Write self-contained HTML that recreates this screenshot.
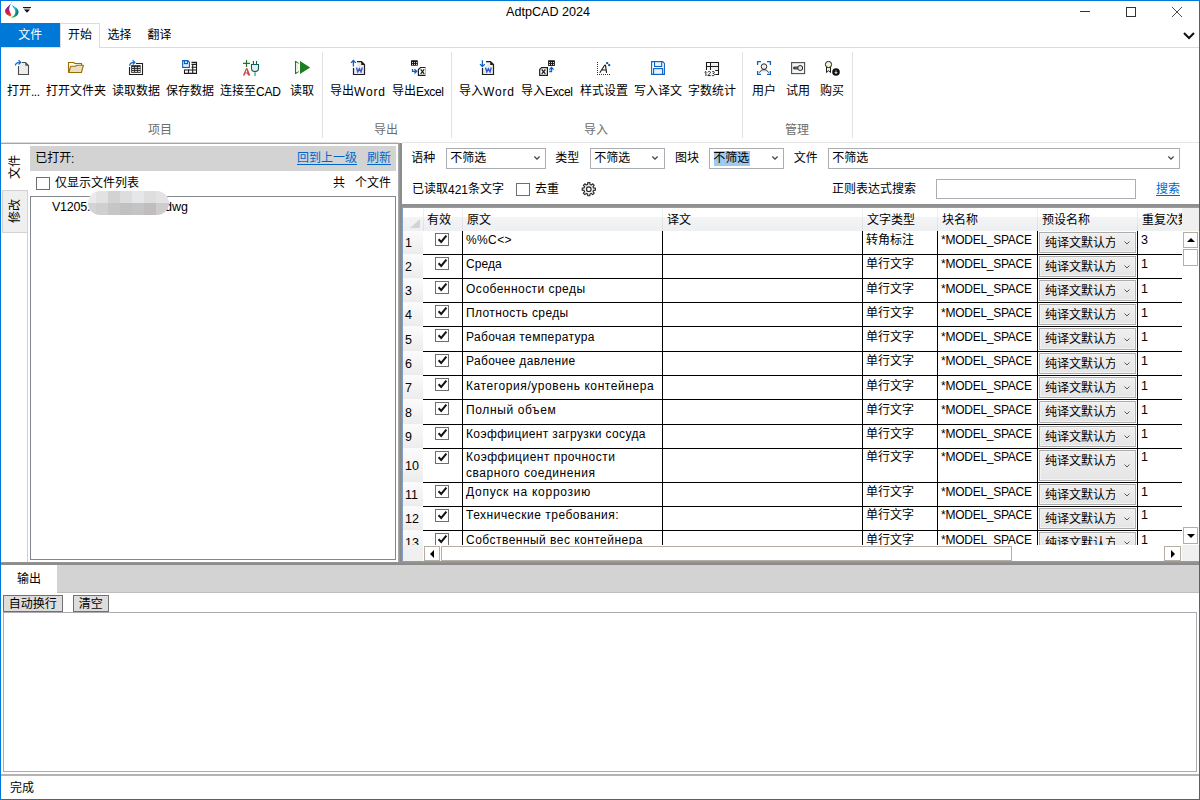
<!DOCTYPE html>
<html><head><meta charset="utf-8">
<style>
*{box-sizing:border-box;margin:0;padding:0}
html,body{width:1200px;height:800px;overflow:hidden;background:#fff}
body{font-family:"Liberation Sans","Noto Sans CJK SC",sans-serif;font-size:12px;line-height:16px;color:#000;position:relative;}
#w{position:absolute;left:0;top:0;width:1200px;height:800px;overflow:hidden}
#bd{position:absolute;left:0;top:0;width:1200px;height:800px;border:1px solid #0078d7;z-index:99}
.a{position:absolute}
.t{position:absolute;white-space:nowrap;height:16px;line-height:16px}
.g{color:#6d6d6d}
.lnk{color:#0066cc}
.h{display:inline-block;position:relative;height:16px;line-height:16px;overflow:hidden;vertical-align:top;font-family:"Liberation Sans","Noto Sans CJK SC",sans-serif;font-size:12px}
svg.lt{position:static;display:inline-block;vertical-align:top;overflow:visible}
svg text{font-family:"Liberation Sans",sans-serif;font-size:12px;fill:#000}
.ul{position:absolute;left:0;right:0;top:14px;height:1px;background:#0066cc}
.sep{position:absolute;width:1px;background:#e2e2e2;top:52px;height:86px}
.cb{position:absolute;width:14px;height:13px;border:1px solid #6e6e6e;background:#fff}
.combo{position:absolute;height:21px;border:1px solid #abadb3;background:#fff}
.btn{position:absolute;height:17px;border:1px solid #707070;background:#ddd}
.hl{position:absolute;height:1px;background:#000;left:423px;width:759px}
.vl{position:absolute;width:1px;background:#000;top:231px;height:314px}
.rh{position:absolute;left:403px;width:20px;background:linear-gradient(#fbfbfb,#ececec)}
.cc{position:absolute;left:1039px;width:97px;height:21px;border:1px solid #acacac;background:linear-gradient(#efefef,#e5e5e5);overflow:hidden}
.cc i{position:absolute;left:0;top:0;right:0;bottom:0;border:1px solid #f3f3f3}
.w{letter-spacing:.65px}.e{letter-spacing:-.25px}.c{letter-spacing:0}
.sb{position:absolute;border:1px solid #b5aea2;background:#fff}
svg{position:absolute;overflow:visible}
</style></head><body>
<div id="w">

<svg style="left:0;top:0" width="22" height="20" viewBox="0 0 22 20"><defs><linearGradient id="ga" x1="0" y1="0" x2="0" y2="1"><stop offset="0" stop-color="#6f2bb0"/><stop offset=".3" stop-color="#8a1f96"/><stop offset=".55" stop-color="#c4185e"/><stop offset=".8" stop-color="#d6282c"/><stop offset="1" stop-color="#f58a1c"/></linearGradient><linearGradient id="gb" x1="0" y1="0" x2="0" y2="1"><stop offset="0" stop-color="#2aa8f2"/><stop offset=".4" stop-color="#25c3dc"/><stop offset=".7" stop-color="#16a58a"/><stop offset="1" stop-color="#2fa23a"/></linearGradient><linearGradient id="gc" x1="0" y1="0" x2="1" y2="0"><stop offset=".45" stop-color="#004a5c" stop-opacity="0"/><stop offset="1" stop-color="#004a5c" stop-opacity=".75"/></linearGradient></defs>
<path d="M10.4 4.2C9.3 5.6 6.6 7.3 5.4 9.6C4.5 11.6 5.3 13.4 7 14.7C8.3 15.7 9.8 16.3 11.2 16.6C11.6 15.6 11 14.2 10.4 13C9.6 11.4 9 9.8 9.3 8C9.5 6.7 10.2 5.6 10.4 4.2Z" fill="url(#ga)"/>
<path d="M12.2 4.4C13 5.6 15.4 6.9 17 8.6C18.4 10.1 18.9 12 18 14C17 16 14.6 17.4 12.3 17.8C11.9 17.8 11.6 17.5 11.6 17.2C13.2 16.4 14.6 15 15.2 13.2C15.7 11.4 15 9.6 13.8 8.2C12.9 7.1 12.2 6 12.2 4.4Z" fill="url(#gb)"/>
<path d="M12.2 4.4C13 5.6 15.4 6.9 17 8.6C18.4 10.1 18.9 12 18 14C17 16 14.6 17.4 12.3 17.8C11.9 17.8 11.6 17.5 11.6 17.2C13.2 16.4 14.6 15 15.2 13.2C15.7 11.4 15 9.6 13.8 8.2C12.9 7.1 12.2 6 12.2 4.4Z" fill="url(#gc)"/>
<circle cx="11.4" cy="2.5" r=".45" fill="#3aa0f0"/><circle cx="10.5" cy="4.3" r=".5" fill="#3a86e8"/></svg>
<div class="a" style="left:23px;top:7px;width:8px;height:1px;background:#111"></div>
<svg style="left:23px;top:8px" width="8" height="5" viewBox="0 0 8 5"><path d="M0.5 0H7.5L7 1.2H1Z" fill="#bbb"/><path d="M1 1.4H7L4 4.8Z" fill="#111"/></svg>
<div class="t lat" style="left:506px;top:4px;"><svg class="lt" width="84" height="16"><text y="12" textLength="84" lengthAdjust="spacing" style="font-size:12.6px">AdtpCAD 2024</text></svg></div>
<div class="a" style="left:1080px;top:11px;width:10px;height:1px;background:#333"></div>
<div class="a" style="left:1126px;top:7px;width:10px;height:10px;border:1px solid #333"></div>
<svg style="left:1172px;top:7px" width="10" height="10" viewBox="0 0 10 10"><path d="M0 0L10 10M10 0L0 10" stroke="#4a4a4a" stroke-width="1" fill="none"/></svg>


<div class="a" style="left:1px;top:23px;width:59px;height:24px;background:#0078d7"></div>
<div class="a" style="left:0;top:47px;width:1200px;height:1px;background:#dcdcdc"></div>
<div class="a" style="left:60px;top:23px;width:40px;height:25px;border:1px solid #dcdcdc;border-bottom:none;background:#fff"></div>
<div class="t " style="left:18.2px;top:27px;color:#fff"><span class="h" style="width:24px">文件</span></div><div class="t " style="left:68px;top:27px;"><span class="h" style="width:24px">开始</span></div><div class="t " style="left:107.4px;top:27px;"><span class="h" style="width:24px">选择</span></div><div class="t " style="left:147.4px;top:27px;"><span class="h" style="width:24px">翻译</span></div>
<svg style="left:1183px;top:31.5px" width="12" height="8" viewBox="0 0 12 8"><path d="M1 1L6 6L11 1" stroke="#111" stroke-width="2" fill="none"/></svg>

<div class="t " style="left:7px;top:83px;"><span class="h" style="width:24px">打开</span><svg class="lt" width="9" height="16"><text y="13" textLength="9" lengthAdjust="spacing">...</text></svg></div><div class="t " style="left:46px;top:83px;"><span class="h" style="width:60px">打开文件夹</span></div><div class="t " style="left:112px;top:83px;"><span class="h" style="width:48px">读取数据</span></div><div class="t " style="left:166px;top:83px;"><span class="h" style="width:48px">保存数据</span></div><div class="t " style="left:220px;top:83px;"><span class="h" style="width:36px">连接至</span><svg class="lt" width="25" height="16"><text y="13" textLength="25" lengthAdjust="spacing">CAD</text></svg></div><div class="t " style="left:290px;top:83px;"><span class="h" style="width:24px">读取</span></div><div class="t " style="left:330px;top:83px;"><span class="h" style="width:24px">导出</span><svg class="lt" width="31" height="16"><text y="13" textLength="31" lengthAdjust="spacing">Word</text></svg></div><div class="t " style="left:392px;top:83px;"><span class="h" style="width:24px">导出</span><svg class="lt" width="28" height="16"><text y="13" textLength="28" lengthAdjust="spacing">Excel</text></svg></div><div class="t " style="left:459px;top:83px;"><span class="h" style="width:24px">导入</span><svg class="lt" width="31" height="16"><text y="13" textLength="31" lengthAdjust="spacing">Word</text></svg></div><div class="t " style="left:521px;top:83px;"><span class="h" style="width:24px">导入</span><svg class="lt" width="28" height="16"><text y="13" textLength="28" lengthAdjust="spacing">Excel</text></svg></div><div class="t " style="left:580px;top:83px;"><span class="h" style="width:48px">样式设置</span></div><div class="t " style="left:634px;top:83px;"><span class="h" style="width:48px">写入译文</span></div><div class="t " style="left:688px;top:83px;"><span class="h" style="width:48px">字数统计</span></div><div class="t " style="left:752px;top:83px;"><span class="h" style="width:24px">用户</span></div><div class="t " style="left:786px;top:83px;"><span class="h" style="width:24px">试用</span></div><div class="t " style="left:820px;top:83px;"><span class="h" style="width:24px">购买</span></div><div class="t g" style="left:148px;top:122px;"><span class="h" style="width:24px">项目</span></div><div class="t g" style="left:374px;top:122px;"><span class="h" style="width:24px">导出</span></div><div class="t g" style="left:584px;top:122px;"><span class="h" style="width:24px">导入</span></div><div class="t g" style="left:785px;top:122px;"><span class="h" style="width:24px">管理</span></div><div class="sep" style="left:322px"></div><div class="sep" style="left:451px"></div><div class="sep" style="left:742px"></div><div class="sep" style="left:852px"></div><svg style="left:0;top:50px" width="860" height="30" viewBox="0 50 860 30" fill="none" stroke-linecap="butt">
<!-- 1 open -->
<path d="M19 66V74H28V65.5L25.5 63H22Z" fill="#ededed"/>
<path d="M22 62.5H25.5L28.5 65.5V74.5H18.5V66" stroke="#4a4a4a" stroke-width="1.1"/>
<path d="M25.3 62.3V65.7H28.7Z" fill="#555"/>
<path d="M15.4 65.6C15.4 63.4 17 62.4 20.2 62.4" stroke="#186ac6" stroke-width="1.3"/>
<path d="M18.5 60.3L20.8 62.4L18.5 64.5" stroke="#186ac6" stroke-width="1.2"/>
<!-- 2 folder -->
<path d="M68.5 72.5V62.5H73.8L74.8 63.5H81.5V65.3" stroke="#9a6d00" stroke-width="1.1" fill="#fffdf8"/>
<path d="M68.8 72.5L70.6 66.3H75.5L76.5 65.3H83.4L81.4 72.5Z" fill="#e7dfc5" stroke="#9a6d00" stroke-width="1.1" stroke-linejoin="round"/>
<!-- 3 read data -->
<path d="M136 63.5H142.5V74.5H129.5V67" stroke="#1e1e1e" stroke-width="1.1"/>
<rect x="131.2" y="65.2" width="9.4" height="7.6" fill="#1e1e1e"/>
<path d="M132 67.4H134.2M135 67.4H137.2M138 67.4H140.1M132 69.4H134.2M135 69.4H137.2M138 69.4H140.1M132 71.4H134.2M135 71.4H137.2M138 71.4H140.1" stroke="#fff" stroke-width="0.9"/>
<path d="M129.6 65.7C129.8 63.5 131.5 62.4 134.3 62.4" stroke="#186ac6" stroke-width="1.3"/>
<path d="M132.6 60.3L134.9 62.4L132.7 64.5" stroke="#186ac6" stroke-width="1.2"/>
<!-- 4 save data -->
<path d="M182.7 60.7H187.8L189.4 62.3V67.3H182.7Z" stroke="#0a5fc2" stroke-width="1.2" fill="#fff"/>
<path d="M184.5 60.7V63.6H187.4V60.7" stroke="#0a5fc2" stroke-width="1.2"/>
<rect x="183.6" y="65" width="4.9" height="1.6" fill="#dfe9f7"/>
<path d="M191.5 62.4H196.5V73.4H184.5V69.5M191.5 64.4H196.5M191.5 67.3H196.5M184.5 70H196.5M192.7 64.4V73.4M188.5 69.3V73.4" stroke="#1a1a1a" stroke-width="1.1"/>
<!-- 5 connect CAD -->
<path d="M243 63.4H250M246.5 60V66.9" stroke="#1b7a1b" stroke-width="1.2"/>
<path d="M242.8 75.6L246 68.3H247.5L250.4 75.6H248L247.2 73.4H245.3L244.6 75.6Z" fill="#c4302b" fill-opacity=".88"/>
<path d="M245.6 72.4L246.7 69.6L247.2 72.4Z" fill="#fff"/>
<path d="M253.4 61V64.3M256.5 61V64.3" stroke="#0e5e57" stroke-width="1.1"/>
<path d="M251.5 64.5H258.5V68.6C258.5 70.5 257 71.6 255 71.6C253 71.6 251.5 70.5 251.5 68.6Z" fill="#e6efed" stroke="#0e5e57" stroke-width="1.1"/>
<path d="M255 72.2V76" stroke="#69aaa1" stroke-width="1.6"/>
<!-- 6 play -->
<path d="M295.5 61V74M295.3 61.3L298.8 63.6M295.3 73.7L298.8 71.4" stroke="#1e7d1e" stroke-width="1.1"/>
<path d="M296.2 63V72H298.3V63Z" fill="#e3f0e3"/>
<path d="M300 61V74L310.2 67.5Z" fill="#1e7d1e"/>
<!-- 7 export word -->
<g id="wd"><path d="M354 68V74H364V64.5L361.5 62H357.5V68Z" fill="#ececec"/>
<path d="M357 61.6H361.5L364.5 64.6V74.5H353.5V68" stroke="#1e1e1e" stroke-width="1.2"/>
<path d="M361.2 61.3V64.9H364.8Z" fill="#1e1e1e"/>
<path d="M356.5 67.5L357.8 71.9L359.4 68.7L361 71.9L362.3 67.5" stroke="#3558cc" stroke-width="1.4"/></g>
<path d="M353.4 66.6V60.8M351 62.9L353.4 60.5L355.8 62.9" stroke="#0a62c4" stroke-width="1.3"/>
<!-- 8 export excel -->
<rect x="411" y="60.2" width="6.8" height="5.6" fill="#151515" rx=".4"/>
<path d="M412 62.6H413M414 62.6H415M416 62.6H417M412 64.6H413M414 64.6H415M416 64.6H417" stroke="#fff" stroke-width="0.9"/>
<path d="M412.5 69V71.3H416.3M414.4 69.2L416.7 71.3L414.4 73.4" stroke="#0a62c4" stroke-width="1.3"/>
<path d="M425.6 67.5H420.5L418.4 69.6V75.3H425.6" stroke="#1e1e1e" stroke-width="1.2" fill="#fff"/>
<path d="M425.5 67.5V75.3" stroke="#b5b5b5" stroke-width="1"/>
<path d="M420.7 69.4L424.2 73.8M424.2 69.4L420.7 73.8" stroke="#222" stroke-width="1.3"/>
<!-- 9 import word -->
<use href="#wd" x="129"/>
<path d="M482.4 60.3V66.2M480 64.1L482.4 66.5L484.8 64.1" stroke="#0a62c4" stroke-width="1.3"/>
<!-- 10 import excel -->
<rect x="548.1" y="60.2" width="6.8" height="5.7" fill="#151515" rx=".4"/>
<path d="M549 62.6H550M551 62.6H552M553 62.6H554M549 64.6H550M551 64.6H552M553 64.6H554" stroke="#fff" stroke-width="0.9"/>
<path d="M541.6 67.7H547.4V75.3H539.7V69.6Z" stroke="#1e1e1e" stroke-width="1.2" fill="#fff"/>
<path d="M541.7 69.5L545.4 73.8M545.4 69.5L541.7 73.8" stroke="#222" stroke-width="1.3"/>
<path d="M549.2 71.5H551.5V67.6M549.4 69.6L551.5 67.4L553.6 69.6" stroke="#0a62c4" stroke-width="1.3"/>
<!-- 11 style -->
<path d="M597.5 62V75" stroke="#333" stroke-width="1" stroke-dasharray="1 1"/>
<path d="M599 74.5H610" stroke="#333" stroke-width="1" stroke-dasharray="1 1"/>
<path d="M599.8 72.8L604.6 65.3H605.5L606.6 72.8M601.8 70H606.2" stroke="#1a1a1a" stroke-width="1.1"/>
<rect x="606.2" y="62.1" width="2" height="2" fill="#0a47b5"/><rect x="608.2" y="64.1" width="2" height="2" fill="#0a47b5"/>
<!-- 12 write -->
<path d="M651.6 61.6H662.6L664.4 63.4V74.4H651.6Z" stroke="#0a62c4" stroke-width="1.1" fill="#fff"/>
<rect x="654.5" y="61.6" width="7.2" height="4.9" stroke="#0a62c4" stroke-width="1.1" fill="#e9f0f9"/>
<rect x="653.6" y="68.6" width="9" height="5.8" stroke="#0a62c4" stroke-width="1.1" fill="#e9f0f9"/>
<!-- 13 count -->
<path d="M706.5 70V62.5H718.5V74.5H715.3M706.5 66.5H718.5M710.5 62.5V70M715.3 70.5H718.5" stroke="#1a1a1a" stroke-width="1.1"/>
<rect x="711.3" y="63.3" width="6.4" height="2.5" fill="#eee"/><rect x="711.3" y="67.3" width="6.4" height="2.5" fill="#eee"/>
<path d="M704.6 72.3L705.9 71.5V76M707.8 72.4C708.2 71.2 710.6 71.1 710.5 72.6C710.4 73.8 708 74.7 707.8 75.6H710.8M712 72C712.8 71.1 714.6 71.3 714.3 72.6C714.1 73.4 713.2 73.5 712.9 73.5C713.8 73.5 714.7 74 714.5 74.8C714.2 75.9 712.5 75.9 711.8 75.2" stroke="#1a1a1a" stroke-width=".95" fill="none"/>
<!-- 14 user -->
<path d="M757.6 65V61.7H761M767 61.7H770.4V65M770.4 71V74.4H767M761 74.4H757.6V71" stroke="#0a62c4" stroke-width="1.3"/>
<circle cx="764" cy="66.6" r="2.8" fill="#ededed" stroke="#2a2a2a" stroke-width="1"/>
<path d="M759.4 72.6C760.5 70.5 762 69.7 764 69.7C766 69.7 767.5 70.5 768.6 72.6Z" fill="#e9e9e9"/>
<path d="M759.4 72.6C760.5 70.5 762 69.7 764 69.7C766 69.7 767.5 70.5 768.6 72.6" stroke="#2a2a2a" stroke-width="1"/>
<!-- 15 trial -->
<rect x="791.6" y="62.6" width="13" height="11" stroke="#4d4d4d" stroke-width="1.1" fill="#f5f5f5"/>
<path d="M793.7 68H798" stroke="#555" stroke-width="3"/>
<path d="M793.4 68H794.6" stroke="#222" stroke-width="2"/>
<circle cx="800.2" cy="68" r="2.5" fill="#e4e4e4" stroke="#222" stroke-width="1"/>
<!-- 16 buy -->
<path d="M826.5 67V72.6L828.5 70.7L830.5 72.6V67Z" fill="#f7f3d8" stroke="#1a1a1a" stroke-width="1"/>
<circle cx="828.5" cy="64.5" r="3.1" fill="#f7f3d8" stroke="#1a1a1a" stroke-width="1"/>
<circle cx="836" cy="72" r="3.8" fill="#111"/>
<path d="M836 70.2V72.2" stroke="#aaa" stroke-width="1"/>
<path d="M834.2 72.2H837.8L836 73.9Z" fill="#fff"/>
</svg>


<div class="a" style="left:402px;top:142px;width:797px;height:1px;background:#e5e5e5"></div>
<div class="a" style="left:1px;top:142px;width:398px;height:2px;background:linear-gradient(#dcdcdc 50%,#a6a6a6 50%)"></div>
<div class="a" style="left:398px;top:143px;width:4px;height:420px;background:linear-gradient(90deg,#b2b2b2,#999 30%,#8a8a8a 60%,#909090)"></div>
<div class="a" style="left:27px;top:190px;width:1px;height:372px;background:#d0d0d0"></div>
<div class="a" style="left:2px;top:190px;width:26px;height:43px;border:1px solid #d2d2d2;background:#efefef"></div>
<div class="t " style="left:2.5px;top:159px;width:24px;transform:rotate(-90deg);transform-origin:12px 8px"><span class="h" style="width:24px">文件</span></div><div class="t " style="left:2.5px;top:203px;width:24px;transform:rotate(-90deg);transform-origin:12px 8px"><span class="h" style="width:24px">修改</span></div>
<div class="a" style="left:30px;top:146px;width:366px;height:25px;background:#d3d3d3"></div>
<div class="t " style="left:35.3px;top:150px;"><span class="h" style="width:36px">已打开</span><svg class="lt" width="3.4" height="16"><text y="13" textLength="3.4" lengthAdjust="spacing">:</text></svg></div><div class="t lnk" style="left:297px;top:150px;"><span class="h" style="width:60px"><i class="ul"></i>回到上一级</span></div><div class="t lnk" style="left:367px;top:150px;"><span class="h" style="width:24px"><i class="ul"></i>刷新</span></div>
<div class="cb" style="left:36px;top:177px"></div>
<div class="t " style="left:55px;top:175px;"><span class="h" style="width:84px">仅显示文件列表</span></div><div class="t " style="left:333px;top:175px;"><span class="h" style="width:12px">共</span></div><div class="t " style="left:355px;top:175px;"><span class="h" style="width:36px">个文件</span></div>
<div class="a" style="left:30px;top:196px;width:366px;height:364px;border:1px solid #828790;background:#fff"></div>
<div class="t lat" style="left:52px;top:199px;"><svg class="lt" width="38.5" height="16"><text y="12" textLength="38.5" lengthAdjust="spacing" style="font-size:12.5px">V1205.</text></svg></div><div class="t lat" style="left:165px;top:199px;"><svg class="lt" width="23" height="16"><text y="12" textLength="23" lengthAdjust="spacing" style="font-size:12.5px">dwg</text></svg></div><div class="a" style="left:88px;top:191px;width:81px;height:24px;border-radius:12px;overflow:hidden"><div class="a" style="left:0px;top:0;width:8px;height:12px;background:#e9eaec"></div><div class="a" style="left:0px;top:12px;width:8px;height:12px;background:#d3d3d4"></div><div class="a" style="left:8px;top:0;width:12px;height:12px;background:#e2e2e3"></div><div class="a" style="left:8px;top:12px;width:12px;height:12px;background:#d0cfcf"></div><div class="a" style="left:20px;top:0;width:12px;height:12px;background:#d2d2d3"></div><div class="a" style="left:20px;top:12px;width:12px;height:12px;background:#c6c6c8"></div><div class="a" style="left:32px;top:0;width:12px;height:12px;background:#dcdddd"></div><div class="a" style="left:32px;top:12px;width:12px;height:12px;background:#c2c0c1"></div><div class="a" style="left:44px;top:0;width:12px;height:12px;background:#e6e7e9"></div><div class="a" style="left:44px;top:12px;width:12px;height:12px;background:#c4c4c6"></div><div class="a" style="left:56px;top:0;width:12px;height:12px;background:#dedede"></div><div class="a" style="left:56px;top:12px;width:12px;height:12px;background:#c0bdbc"></div><div class="a" style="left:68px;top:0;width:13px;height:12px;background:#e3e3e4"></div><div class="a" style="left:68px;top:12px;width:13px;height:12px;background:#cdcdce"></div></div>
<div class="t " style="left:411.3px;top:150px;"><span class="h" style="width:24px">语种</span></div><div class="combo" style="left:446px;top:148px;width:100px"></div><div class="t " style="left:450.3px;top:150px;"><span class="h" style="width:36px">不筛选</span></div><svg style="left:533.5px;top:155.8px" width="6" height="4" viewBox="0 0 6 4"><path d="M.4 .5L3 3.1L5.6 .5" stroke="#444" stroke-width="1.25" fill="none"/></svg><div class="t " style="left:555.3px;top:150px;"><span class="h" style="width:24px">类型</span></div><div class="combo" style="left:590px;top:148px;width:75px"></div><div class="t " style="left:594.3px;top:150px;"><span class="h" style="width:36px">不筛选</span></div><svg style="left:651.5px;top:155.8px" width="6" height="4" viewBox="0 0 6 4"><path d="M.4 .5L3 3.1L5.6 .5" stroke="#444" stroke-width="1.25" fill="none"/></svg><div class="t " style="left:675px;top:150px;"><span class="h" style="width:24px">图块</span></div><div class="combo" style="left:709px;top:148px;width:75px"></div><div class="a" style="left:714px;top:151px;width:36px;height:15px;background:#9fc9ee"></div><div class="t " style="left:713.3px;top:150px;"><span class="h" style="width:36px">不筛选</span></div><svg style="left:771.5px;top:155.8px" width="6" height="4" viewBox="0 0 6 4"><path d="M.4 .5L3 3.1L5.6 .5" stroke="#444" stroke-width="1.25" fill="none"/></svg><div class="t " style="left:793.7px;top:150px;"><span class="h" style="width:24px">文件</span></div><div class="combo" style="left:828px;top:148px;width:352px"></div><div class="t " style="left:832.3px;top:150px;"><span class="h" style="width:36px">不筛选</span></div><svg style="left:1167.5px;top:155.8px" width="6" height="4" viewBox="0 0 6 4"><path d="M.4 .5L3 3.1L5.6 .5" stroke="#444" stroke-width="1.25" fill="none"/></svg><div class="t " style="left:412px;top:181px;"><span class="h" style="width:36px">已读取</span><svg class="lt" width="20" height="16"><text y="13" textLength="20" lengthAdjust="spacing">421</text></svg><span class="h" style="width:36px">条文字</span></div><div class="cb" style="left:516px;top:183px"></div><div class="t " style="left:535px;top:181px;"><span class="h" style="width:24px">去重</span></div><svg style="left:574px;top:176px" width="30" height="26" viewBox="574 176 30 26"><path d="M587.59 184.45L587.73 182.59L589.87 182.59L590.01 184.45L591.30 184.99L592.72 183.77L594.23 185.28L593.01 186.70L593.55 187.99L595.41 188.13L595.41 190.27L593.55 190.41L593.01 191.70L594.23 193.12L592.72 194.63L591.30 193.41L590.01 193.95L589.87 195.81L587.73 195.81L587.59 193.95L586.30 193.41L584.88 194.63L583.37 193.12L584.59 191.70L584.05 190.41L582.19 190.27L582.19 188.13L584.05 187.99L584.59 186.70L583.37 185.28L584.88 183.77L586.30 184.99Z" fill="#f0f0f0" stroke="#262626" stroke-width="1.1" stroke-linejoin="round"/><circle cx="588.8" cy="189.2" r="2.3" fill="#fff" stroke="#262626" stroke-width="1.1"/></svg><div class="t " style="left:832px;top:181px;"><span class="h" style="width:84px">正则表达式搜索</span></div><div class="a" style="left:936px;top:179px;width:200px;height:20px;border:1px solid #abadb3;background:#fff"></div><div class="t lnk" style="left:1156px;top:181px;"><span class="h" style="width:24px"><i class="ul"></i>搜索</span></div><div class="a" style="left:402px;top:204px;width:797px;height:3px;background:linear-gradient(#8f8f8f 80%,#9fa9b5)"></div>

<div class="a" style="left:402px;top:207px;width:797px;height:355px;border:1px solid #7f9fc6;border-right:none;background:#fff"></div>
<div class="a" style="left:403px;top:208px;width:779px;height:23px;background:linear-gradient(#ffffff 0,#ffffff 40%,#f3f4f5 41%,#eeeff1 100%)"></div>
<div class="a" style="left:1182px;top:208px;width:17px;height:23px;background:#f0f0f0"></div>
<div class="a" style="left:403px;top:231px;width:20px;height:330px;background:#f0f0f0"></div>
<svg style="left:410px;top:219px" width="10" height="9" viewBox="0 0 10 9"><path d="M10 0V9H0Z" fill="#d4d4d4"/></svg>
<div class="a" style="left:423px;top:208px;width:1px;height:23px;background:linear-gradient(#f4f4f4,#dcdcdc)"></div><div class="a" style="left:462px;top:208px;width:1px;height:23px;background:linear-gradient(#f4f4f4,#dcdcdc)"></div><div class="a" style="left:662px;top:208px;width:1px;height:23px;background:linear-gradient(#f4f4f4,#dcdcdc)"></div><div class="a" style="left:862px;top:208px;width:1px;height:23px;background:linear-gradient(#f4f4f4,#dcdcdc)"></div><div class="a" style="left:937px;top:208px;width:1px;height:23px;background:linear-gradient(#f4f4f4,#dcdcdc)"></div><div class="a" style="left:1037px;top:208px;width:1px;height:23px;background:linear-gradient(#f4f4f4,#dcdcdc)"></div><div class="a" style="left:1137px;top:208px;width:1px;height:23px;background:linear-gradient(#f4f4f4,#dcdcdc)"></div><div class="t " style="left:427px;top:212px;"><span class="h" style="width:24px">有效</span></div><div class="t " style="left:467px;top:212px;"><span class="h" style="width:24px">原文</span></div><div class="t " style="left:667px;top:212px;"><span class="h" style="width:24px">译文</span></div><div class="t " style="left:867px;top:212px;"><span class="h" style="width:48px">文字类型</span></div><div class="t " style="left:942px;top:212px;"><span class="h" style="width:36px">块名称</span></div><div class="t " style="left:1042px;top:212px;"><span class="h" style="width:48px">预设名称</span></div><div class="t " style="left:1142px;top:212px;width:40px;overflow:hidden"><span class="h" style="width:48px">重复次数</span></div><div class="a" style="left:403px;top:231px;width:779px;height:314px;overflow:hidden"><div class="a" style="left:-403px;top:-231px;width:1200px;height:800px"><div class="rh" style="top:231px;height:23px"></div><div class="a" style="left:403px;top:254px;width:20px;height:1px;background:#fafafa"></div><div class="t lat" style="left:405px;top:235px;font-size:12.5px">1</div><div class="hl" style="top:254px"></div><div class="cb" style="left:435px;top:233px;height:13px"></div><svg style="left:438px;top:235px" width="9" height="8" viewBox="0 0 9 8"><path d="M.6 4.2L3.2 6.9L8.4 .7" stroke="#111" stroke-width="2" fill="none"/></svg><div class="t ru" style="left:466px;top:232px;"><svg class="lt" width="45.6" height="16"><text y="12" textLength="45.6" lengthAdjust="spacing">%%C&lt;&gt;</text></svg></div><div class="t " style="left:866px;top:232px;"><span class="h" style="width:48px">转角标注</span></div><div class="t lat" style="left:941px;top:232px;"><svg class="lt" width="91" height="16"><text y="12" textLength="91" lengthAdjust="spacing">*MODEL_SPACE</text></svg></div><div class="cc" style="top:232px;height:21px"><i></i></div><div class="t " style="left:1045px;top:235px;width:70px;overflow:hidden"><span class="h" style="width:72px">纯译文默认方</span></div><svg style="left:1123.5px;top:241px" width="6" height="4" viewBox="0 0 6 4"><path d="M.5 .5L3 3L5.5 .5" stroke="#5a5a5a" stroke-width="1" fill="none"/></svg><div class="t lat" style="left:1141px;top:232px;font-size:12.5px">3</div><div class="rh" style="top:255px;height:23px"></div><div class="a" style="left:403px;top:278px;width:20px;height:1px;background:#fafafa"></div><div class="t lat" style="left:405px;top:259px;font-size:12.5px">2</div><div class="hl" style="top:278px"></div><div class="cb" style="left:435px;top:257px;height:13px"></div><svg style="left:438px;top:259px" width="9" height="8" viewBox="0 0 9 8"><path d="M.6 4.2L3.2 6.9L8.4 .7" stroke="#111" stroke-width="2" fill="none"/></svg><div class="t ru" style="left:466px;top:256px;"><svg class="lt" width="35.8" height="16"><text y="12" textLength="35.8" lengthAdjust="spacing">Среда</text></svg></div><div class="t " style="left:866px;top:256px;"><span class="h" style="width:48px">单行文字</span></div><div class="t lat" style="left:941px;top:256px;"><svg class="lt" width="91" height="16"><text y="12" textLength="91" lengthAdjust="spacing">*MODEL_SPACE</text></svg></div><div class="cc" style="top:256px;height:21px"><i></i></div><div class="t " style="left:1045px;top:259px;width:70px;overflow:hidden"><span class="h" style="width:72px">纯译文默认方</span></div><svg style="left:1123.5px;top:265px" width="6" height="4" viewBox="0 0 6 4"><path d="M.5 .5L3 3L5.5 .5" stroke="#5a5a5a" stroke-width="1" fill="none"/></svg><div class="t lat" style="left:1141px;top:256px;font-size:12.5px">1</div><div class="rh" style="top:279px;height:23px"></div><div class="a" style="left:403px;top:302px;width:20px;height:1px;background:#fafafa"></div><div class="t lat" style="left:405px;top:283px;font-size:12.5px">3</div><div class="hl" style="top:302px"></div><div class="cb" style="left:435px;top:281px;height:13px"></div><svg style="left:438px;top:283px" width="9" height="8" viewBox="0 0 9 8"><path d="M.6 4.2L3.2 6.9L8.4 .7" stroke="#111" stroke-width="2" fill="none"/></svg><div class="t ru" style="left:466px;top:281px;"><svg class="lt" width="119" height="16"><text y="12" textLength="119" lengthAdjust="spacing">Особенности среды</text></svg></div><div class="t " style="left:866px;top:281px;"><span class="h" style="width:48px">单行文字</span></div><div class="t lat" style="left:941px;top:281px;"><svg class="lt" width="91" height="16"><text y="12" textLength="91" lengthAdjust="spacing">*MODEL_SPACE</text></svg></div><div class="cc" style="top:280px;height:21px"><i></i></div><div class="t " style="left:1045px;top:283px;width:70px;overflow:hidden"><span class="h" style="width:72px">纯译文默认方</span></div><svg style="left:1123.5px;top:289px" width="6" height="4" viewBox="0 0 6 4"><path d="M.5 .5L3 3L5.5 .5" stroke="#5a5a5a" stroke-width="1" fill="none"/></svg><div class="t lat" style="left:1141px;top:281px;font-size:12.5px">1</div><div class="rh" style="top:303px;height:23px"></div><div class="a" style="left:403px;top:326px;width:20px;height:1px;background:#fafafa"></div><div class="t lat" style="left:405px;top:307px;font-size:12.5px">4</div><div class="hl" style="top:326px"></div><div class="cb" style="left:435px;top:305px;height:13px"></div><svg style="left:438px;top:307px" width="9" height="8" viewBox="0 0 9 8"><path d="M.6 4.2L3.2 6.9L8.4 .7" stroke="#111" stroke-width="2" fill="none"/></svg><div class="t ru" style="left:466px;top:305px;"><svg class="lt" width="102.2" height="16"><text y="12" textLength="102.2" lengthAdjust="spacing">Плотность среды</text></svg></div><div class="t " style="left:866px;top:305px;"><span class="h" style="width:48px">单行文字</span></div><div class="t lat" style="left:941px;top:305px;"><svg class="lt" width="91" height="16"><text y="12" textLength="91" lengthAdjust="spacing">*MODEL_SPACE</text></svg></div><div class="cc" style="top:304px;height:21px"><i></i></div><div class="t " style="left:1045px;top:307px;width:70px;overflow:hidden"><span class="h" style="width:72px">纯译文默认方</span></div><svg style="left:1123.5px;top:313px" width="6" height="4" viewBox="0 0 6 4"><path d="M.5 .5L3 3L5.5 .5" stroke="#5a5a5a" stroke-width="1" fill="none"/></svg><div class="t lat" style="left:1141px;top:305px;font-size:12.5px">1</div><div class="rh" style="top:327px;height:24px"></div><div class="a" style="left:403px;top:351px;width:20px;height:1px;background:#fafafa"></div><div class="t lat" style="left:405px;top:331.5px;font-size:12.5px">5</div><div class="hl" style="top:351px"></div><div class="cb" style="left:435px;top:329px;height:13px"></div><svg style="left:438px;top:331px" width="9" height="8" viewBox="0 0 9 8"><path d="M.6 4.2L3.2 6.9L8.4 .7" stroke="#111" stroke-width="2" fill="none"/></svg><div class="t ru" style="left:466px;top:329px;"><svg class="lt" width="128.5" height="16"><text y="12" textLength="128.5" lengthAdjust="spacing">Рабочая температура</text></svg></div><div class="t " style="left:866px;top:329px;"><span class="h" style="width:48px">单行文字</span></div><div class="t lat" style="left:941px;top:329px;"><svg class="lt" width="91" height="16"><text y="12" textLength="91" lengthAdjust="spacing">*MODEL_SPACE</text></svg></div><div class="cc" style="top:328px;height:22px"><i></i></div><div class="t " style="left:1045px;top:331px;width:70px;overflow:hidden"><span class="h" style="width:72px">纯译文默认方</span></div><svg style="left:1123.5px;top:337.5px" width="6" height="4" viewBox="0 0 6 4"><path d="M.5 .5L3 3L5.5 .5" stroke="#5a5a5a" stroke-width="1" fill="none"/></svg><div class="t lat" style="left:1141px;top:329px;font-size:12.5px">1</div><div class="rh" style="top:352px;height:23px"></div><div class="a" style="left:403px;top:375px;width:20px;height:1px;background:#fafafa"></div><div class="t lat" style="left:405px;top:356px;font-size:12.5px">6</div><div class="hl" style="top:375px"></div><div class="cb" style="left:435px;top:354px;height:13px"></div><svg style="left:438px;top:356px" width="9" height="8" viewBox="0 0 9 8"><path d="M.6 4.2L3.2 6.9L8.4 .7" stroke="#111" stroke-width="2" fill="none"/></svg><div class="t ru" style="left:466px;top:353px;"><svg class="lt" width="109.3" height="16"><text y="12" textLength="109.3" lengthAdjust="spacing">Рабочее давление</text></svg></div><div class="t " style="left:866px;top:353px;"><span class="h" style="width:48px">单行文字</span></div><div class="t lat" style="left:941px;top:353px;"><svg class="lt" width="91" height="16"><text y="12" textLength="91" lengthAdjust="spacing">*MODEL_SPACE</text></svg></div><div class="cc" style="top:353px;height:21px"><i></i></div><div class="t " style="left:1045px;top:356px;width:70px;overflow:hidden"><span class="h" style="width:72px">纯译文默认方</span></div><svg style="left:1123.5px;top:362px" width="6" height="4" viewBox="0 0 6 4"><path d="M.5 .5L3 3L5.5 .5" stroke="#5a5a5a" stroke-width="1" fill="none"/></svg><div class="t lat" style="left:1141px;top:353px;font-size:12.5px">1</div><div class="rh" style="top:376px;height:23px"></div><div class="a" style="left:403px;top:399px;width:20px;height:1px;background:#fafafa"></div><div class="t lat" style="left:405px;top:380px;font-size:12.5px">7</div><div class="hl" style="top:399px"></div><div class="cb" style="left:435px;top:378px;height:13px"></div><svg style="left:438px;top:380px" width="9" height="8" viewBox="0 0 9 8"><path d="M.6 4.2L3.2 6.9L8.4 .7" stroke="#111" stroke-width="2" fill="none"/></svg><div class="t ru" style="left:466px;top:378px;"><svg class="lt" width="187.8" height="16"><text y="12" textLength="187.8" lengthAdjust="spacing">Категория/уровень контейнера</text></svg></div><div class="t " style="left:866px;top:378px;"><span class="h" style="width:48px">单行文字</span></div><div class="t lat" style="left:941px;top:378px;"><svg class="lt" width="91" height="16"><text y="12" textLength="91" lengthAdjust="spacing">*MODEL_SPACE</text></svg></div><div class="cc" style="top:377px;height:21px"><i></i></div><div class="t " style="left:1045px;top:380px;width:70px;overflow:hidden"><span class="h" style="width:72px">纯译文默认方</span></div><svg style="left:1123.5px;top:386px" width="6" height="4" viewBox="0 0 6 4"><path d="M.5 .5L3 3L5.5 .5" stroke="#5a5a5a" stroke-width="1" fill="none"/></svg><div class="t lat" style="left:1141px;top:378px;font-size:12.5px">1</div><div class="rh" style="top:400px;height:24px"></div><div class="a" style="left:403px;top:424px;width:20px;height:1px;background:#fafafa"></div><div class="t lat" style="left:405px;top:404.5px;font-size:12.5px">8</div><div class="hl" style="top:424px"></div><div class="cb" style="left:435px;top:402px;height:13px"></div><svg style="left:438px;top:404px" width="9" height="8" viewBox="0 0 9 8"><path d="M.6 4.2L3.2 6.9L8.4 .7" stroke="#111" stroke-width="2" fill="none"/></svg><div class="t ru" style="left:466px;top:402px;"><svg class="lt" width="89.7" height="16"><text y="12" textLength="89.7" lengthAdjust="spacing">Полный объем</text></svg></div><div class="t " style="left:866px;top:402px;"><span class="h" style="width:48px">单行文字</span></div><div class="t lat" style="left:941px;top:402px;"><svg class="lt" width="91" height="16"><text y="12" textLength="91" lengthAdjust="spacing">*MODEL_SPACE</text></svg></div><div class="cc" style="top:401px;height:22px"><i></i></div><div class="t " style="left:1045px;top:404px;width:70px;overflow:hidden"><span class="h" style="width:72px">纯译文默认方</span></div><svg style="left:1123.5px;top:410.5px" width="6" height="4" viewBox="0 0 6 4"><path d="M.5 .5L3 3L5.5 .5" stroke="#5a5a5a" stroke-width="1" fill="none"/></svg><div class="t lat" style="left:1141px;top:402px;font-size:12.5px">1</div><div class="rh" style="top:425px;height:23px"></div><div class="a" style="left:403px;top:448px;width:20px;height:1px;background:#fafafa"></div><div class="t lat" style="left:405px;top:429px;font-size:12.5px">9</div><div class="hl" style="top:448px"></div><div class="cb" style="left:435px;top:427px;height:13px"></div><svg style="left:438px;top:429px" width="9" height="8" viewBox="0 0 9 8"><path d="M.6 4.2L3.2 6.9L8.4 .7" stroke="#111" stroke-width="2" fill="none"/></svg><div class="t ru" style="left:466px;top:426px;"><svg class="lt" width="179.5" height="16"><text y="12" textLength="179.5" lengthAdjust="spacing">Коэффициент загрузки сосуда</text></svg></div><div class="t " style="left:866px;top:426px;"><span class="h" style="width:48px">单行文字</span></div><div class="t lat" style="left:941px;top:426px;"><svg class="lt" width="91" height="16"><text y="12" textLength="91" lengthAdjust="spacing">*MODEL_SPACE</text></svg></div><div class="cc" style="top:426px;height:21px"><i></i></div><div class="t " style="left:1045px;top:429px;width:70px;overflow:hidden"><span class="h" style="width:72px">纯译文默认方</span></div><svg style="left:1123.5px;top:435px" width="6" height="4" viewBox="0 0 6 4"><path d="M.5 .5L3 3L5.5 .5" stroke="#5a5a5a" stroke-width="1" fill="none"/></svg><div class="t lat" style="left:1141px;top:426px;font-size:12.5px">1</div><div class="rh" style="top:449px;height:33px"></div><div class="a" style="left:403px;top:482px;width:20px;height:1px;background:#fafafa"></div><div class="t lat" style="left:405px;top:458px;font-size:12.5px">10</div><div class="hl" style="top:482px"></div><div class="cb" style="left:435px;top:451px;height:13px"></div><svg style="left:438px;top:453px" width="9" height="8" viewBox="0 0 9 8"><path d="M.6 4.2L3.2 6.9L8.4 .7" stroke="#111" stroke-width="2" fill="none"/></svg><div class="t ru" style="left:466px;top:449px;"><svg class="lt" width="148.9" height="16"><text y="12" textLength="148.9" lengthAdjust="spacing">Коэффициент прочности</text></svg></div><div class="t ru" style="left:466px;top:465px;"><svg class="lt" width="128.9" height="16"><text y="12" textLength="128.9" lengthAdjust="spacing">сварного соединения</text></svg></div><div class="t " style="left:866px;top:449px;"><span class="h" style="width:48px">单行文字</span></div><div class="t lat" style="left:941px;top:449px;"><svg class="lt" width="91" height="16"><text y="12" textLength="91" lengthAdjust="spacing">*MODEL_SPACE</text></svg></div><div class="cc" style="top:450px;height:31px"><i></i></div><div class="t " style="left:1045px;top:453px;width:70px;overflow:hidden"><span class="h" style="width:72px">纯译文默认方</span></div><svg style="left:1123.5px;top:464px" width="6" height="4" viewBox="0 0 6 4"><path d="M.5 .5L3 3L5.5 .5" stroke="#5a5a5a" stroke-width="1" fill="none"/></svg><div class="t lat" style="left:1141px;top:449px;font-size:12.5px">1</div><div class="rh" style="top:483px;height:23px"></div><div class="a" style="left:403px;top:506px;width:20px;height:1px;background:#fafafa"></div><div class="t lat" style="left:405px;top:487px;font-size:12.5px">11</div><div class="hl" style="top:506px"></div><div class="cb" style="left:435px;top:485px;height:13px"></div><svg style="left:438px;top:487px" width="9" height="8" viewBox="0 0 9 8"><path d="M.6 4.2L3.2 6.9L8.4 .7" stroke="#111" stroke-width="2" fill="none"/></svg><div class="t ru" style="left:466px;top:484px;"><svg class="lt" width="124.3" height="16"><text y="12" textLength="124.3" lengthAdjust="spacing">Допуск на коррозию</text></svg></div><div class="t " style="left:866px;top:484px;"><span class="h" style="width:48px">单行文字</span></div><div class="t lat" style="left:941px;top:484px;"><svg class="lt" width="91" height="16"><text y="12" textLength="91" lengthAdjust="spacing">*MODEL_SPACE</text></svg></div><div class="cc" style="top:484px;height:21px"><i></i></div><div class="t " style="left:1045px;top:487px;width:70px;overflow:hidden"><span class="h" style="width:72px">纯译文默认方</span></div><svg style="left:1123.5px;top:493px" width="6" height="4" viewBox="0 0 6 4"><path d="M.5 .5L3 3L5.5 .5" stroke="#5a5a5a" stroke-width="1" fill="none"/></svg><div class="t lat" style="left:1141px;top:484px;font-size:12.5px">1</div><div class="rh" style="top:507px;height:23px"></div><div class="a" style="left:403px;top:530px;width:20px;height:1px;background:#fafafa"></div><div class="t lat" style="left:405px;top:511px;font-size:12.5px">12</div><div class="hl" style="top:530px"></div><div class="cb" style="left:435px;top:509px;height:13px"></div><svg style="left:438px;top:511px" width="9" height="8" viewBox="0 0 9 8"><path d="M.6 4.2L3.2 6.9L8.4 .7" stroke="#111" stroke-width="2" fill="none"/></svg><div class="t ru" style="left:466px;top:507px;"><svg class="lt" width="152.6" height="16"><text y="12" textLength="152.6" lengthAdjust="spacing">Технические требования:</text></svg></div><div class="t " style="left:866px;top:507px;"><span class="h" style="width:48px">单行文字</span></div><div class="t lat" style="left:941px;top:507px;"><svg class="lt" width="91" height="16"><text y="12" textLength="91" lengthAdjust="spacing">*MODEL_SPACE</text></svg></div><div class="cc" style="top:508px;height:21px"><i></i></div><div class="t " style="left:1045px;top:511px;width:70px;overflow:hidden"><span class="h" style="width:72px">纯译文默认方</span></div><svg style="left:1123.5px;top:517px" width="6" height="4" viewBox="0 0 6 4"><path d="M.5 .5L3 3L5.5 .5" stroke="#5a5a5a" stroke-width="1" fill="none"/></svg><div class="t lat" style="left:1141px;top:507px;font-size:12.5px">1</div><div class="rh" style="top:531px;height:23px"></div><div class="a" style="left:403px;top:554px;width:20px;height:1px;background:#fafafa"></div><div class="t lat" style="left:405px;top:535px;font-size:12.5px">13</div><div class="hl" style="top:554px"></div><div class="cb" style="left:435px;top:533px;height:13px"></div><svg style="left:438px;top:535px" width="9" height="8" viewBox="0 0 9 8"><path d="M.6 4.2L3.2 6.9L8.4 .7" stroke="#111" stroke-width="2" fill="none"/></svg><div class="t ru" style="left:466px;top:532px;"><svg class="lt" width="176.5" height="16"><text y="12" textLength="176.5" lengthAdjust="spacing">Собственный вес контейнера</text></svg></div><div class="t " style="left:866px;top:532px;"><span class="h" style="width:48px">单行文字</span></div><div class="t lat" style="left:941px;top:532px;"><svg class="lt" width="91" height="16"><text y="12" textLength="91" lengthAdjust="spacing">*MODEL_SPACE</text></svg></div><div class="cc" style="top:532px;height:21px"><i></i></div><div class="t " style="left:1045px;top:535px;width:70px;overflow:hidden"><span class="h" style="width:72px">纯译文默认方</span></div><svg style="left:1123.5px;top:541px" width="6" height="4" viewBox="0 0 6 4"><path d="M.5 .5L3 3L5.5 .5" stroke="#5a5a5a" stroke-width="1" fill="none"/></svg><div class="t lat" style="left:1141px;top:532px;font-size:12.5px">1</div><div class="vl" style="left:462px"></div><div class="vl" style="left:662px"></div><div class="vl" style="left:862px"></div><div class="vl" style="left:937px"></div><div class="vl" style="left:1037px"></div><div class="vl" style="left:1137px"></div></div></div><div class="sb" style="left:1183px;top:232px;width:15px;height:16px"></div><svg style="left:1186.5px;top:238px" width="8" height="4" viewBox="0 0 8 4"><path d="M0 4L4 0L8 4Z" fill="#000"/></svg><div class="sb" style="left:1183px;top:249px;width:15px;height:17px"></div><div class="sb" style="left:1183px;top:527px;width:15px;height:17px"></div><svg style="left:1186.5px;top:534px" width="8" height="4" viewBox="0 0 8 4"><path d="M0 0L8 0L4 4Z" fill="#000"/></svg><div class="a" style="left:1182px;top:545px;width:17px;height:16px;background:#f0f0f0"></div><div class="a" style="left:403px;top:545px;width:20px;height:16px;background:#f0f0f0"></div><div class="sb" style="left:424px;top:546px;width:16px;height:15px"></div><svg style="left:430px;top:549.5px" width="4" height="8" viewBox="0 0 4 8"><path d="M4 0V8L0 4Z" fill="#000"/></svg><div class="sb" style="left:441px;top:546px;width:571px;height:15px"></div><div class="sb" style="left:1164px;top:546px;width:17px;height:15px"></div><svg style="left:1171px;top:549.5px" width="4" height="8" viewBox="0 0 4 8"><path d="M0 0V8L4 4Z" fill="#000"/></svg>

<div class="a" style="left:1px;top:562px;width:1198px;height:3px;background:linear-gradient(#9a9a9a,#8c8c8c 40%)"></div>
<div class="a" style="left:1px;top:565px;width:1198px;height:28px;background:#d3d3d3"></div>
<div class="a" style="left:1px;top:565px;width:56px;height:28px;background:#fff"></div>
<div class="a" style="left:57px;top:592px;width:1142px;height:1px;background:#bdbdbd"></div>
<div class="t " style="left:17px;top:571px;"><span class="h" style="width:24px">输出</span></div>
<div class="btn" style="left:3px;top:595px;width:60px"></div><div class="t " style="left:8.8px;top:595.5px;"><span class="h" style="width:48px">自动换行</span></div>
<div class="btn" style="left:73px;top:595px;width:36px"></div><div class="t " style="left:78.8px;top:595.5px;"><span class="h" style="width:24px">清空</span></div>
<div class="a" style="left:3px;top:612px;width:1194px;height:160px;border:1px solid #a9abb1;background:#fff"></div>
<div class="a" style="left:1px;top:774px;width:1198px;height:2px;background:#b4b4b4"></div>
<div class="t " style="left:10px;top:780px;"><span class="h" style="width:24px">完成</span></div>
</div><div id="bd"></div>
</body></html>
